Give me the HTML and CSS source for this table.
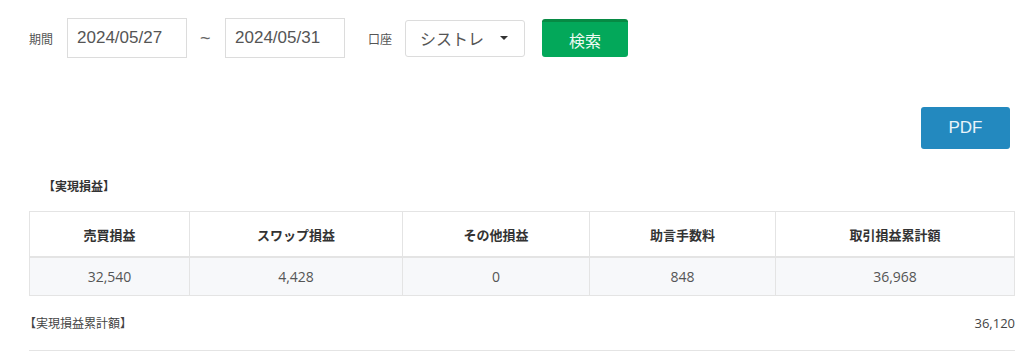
FILE: index.html
```html
<!DOCTYPE html>
<html lang="ja">
<head>
    <meta charset="UTF-8">
    <meta name="viewport" content="width=device-width, initial-scale=1.0">
    <title>実現損益</title>
    <link rel="stylesheet" href="styles.css">
</head>
<body>

<div class="page">
    <form class="search">
        <span class="search-label">期間</span>
        <input class="date-input" type="text" value="2024/05/27">
        <span class="range-sep">~</span>
        <input class="date-input" type="text" value="2024/05/31">
        <span class="search-label account-label">口座</span>
        <div class="select">
            <span>シストレ</span>
            <span class="caret"></span>
        </div>
        <button class="btn-search" type="button">検索</button>
    </form>

    <div class="toolbar">
        <button class="btn-pdf" type="button">PDF</button>
    </div>

    <h2 class="section-title">【実現損益】</h2>
    <table class="pl-table">
        <thead>
            <tr>
                <th class="col-1">売買損益</th>
                <th class="col-2">スワップ損益</th>
                <th class="col-3">その他損益</th>
                <th class="col-4">助言手数料</th>
                <th class="col-5">取引損益累計額</th>
            </tr>
        </thead>
        <tbody>
            <tr>
                <td>32,540</td>
                <td>4,428</td>
                <td>0</td>
                <td>848</td>
                <td>36,968</td>
            </tr>
        </tbody>
    </table>

    <div class="total">
        <span class="total-label">【実現損益累計額】</span>
        <span class="total-value">36,120</span>
    </div>
</div>

</body>
</html>
```

FILE: styles.css
```css
body {
    margin: 0;
    background: #fff;
    font-family: "Noto Sans CJK JP", "Open Sans", sans-serif;
    color: #333;
}
.page {
    padding: 0 9px 0 29px;
}

/* search form */
.search {
    display: flex;
    align-items: center;
    height: 40px;
    margin: 18px 0 0;
}
.search-label {
    font-size: 12px;
    color: #555;
    margin-right: 14px;
}
.account-label {
    margin-left: 23px;
    margin-right: 13px;
}
.date-input {
    box-sizing: border-box;
    width: 120px;
    height: 40px;
    padding: 0 9px;
    border: 1px solid #dcdcdc;
    font-family: "Liberation Sans", Arial, sans-serif;
    font-size: 17px;
    color: #555;
    outline: none;
}
.range-sep {
    margin: 0 14px 0 13px;
    width: 11px;
    font-family: "Liberation Sans", Arial, sans-serif;
    font-size: 18px;
    color: #666;
}
.select {
    box-sizing: border-box;
    display: flex;
    align-items: center;
    justify-content: space-between;
    width: 120px;
    height: 37px;
    padding: 0 16px 0 14px;
    border: 1px solid #dcdcdc;
    border-radius: 3px;
    font-size: 16px;
    color: #555;
}
.caret {
    width: 0;
    height: 0;
    border-left: 4px solid transparent;
    border-right: 4px solid transparent;
    border-top: 4px solid #333;
}
.btn-search {
    box-sizing: border-box;
    width: 86px;
    height: 38px;
    margin-left: 17px;
    border: none;
    border-top: 3px solid #078a44;
    border-radius: 3px;
    background: #03a85a;
    color: #eefaf2;
    font-family: "Noto Sans CJK JP", sans-serif;
    font-size: 16px;
    cursor: pointer;
}

/* pdf export */
.toolbar {
    display: flex;
    justify-content: flex-end;
    margin-top: 49px;
    padding-right: 5px;
}
.btn-pdf {
    width: 89px;
    height: 42px;
    border: none;
    border-radius: 3px;
    background: #2389bf;
    color: #e9f4fa;
    font-family: "Liberation Sans", Arial, sans-serif;
    font-size: 17px;
    cursor: pointer;
}

.section-title {
    margin: 28px 0 0;
    padding-left: 14px;
    font-size: 12px;
    font-weight: bold;
    line-height: 18px;
    color: #333;
}

/* realised profit table */
.pl-table {
    width: 986px;
    margin-top: 16px;
    border-collapse: collapse;
    border: 1px solid #e4e4e4;
}
.pl-table th,
.pl-table td {
    border: 1px solid #e4e4e4;
    text-align: center;
    padding: 0;
}
.pl-table th {
    height: 44px;
    border-bottom: 2px solid #e4e4e4;
    font-size: 13px;
    font-weight: bold;
    color: #333;
}
.pl-table td {
    height: 37px;
    background: #f7f8fa;
    font-family: "Open Sans", sans-serif;
    font-size: 14px;
    color: #555;
}
.col-1 { width: 159px; }
.col-2 { width: 212px; }
.col-3 { width: 186px; }
.col-4 { width: 185px; }

.total {
    display: flex;
    justify-content: space-between;
    align-items: center;
    margin-top: 18px;
    padding-bottom: 18px;
    line-height: 18px;
    border-bottom: 1px solid #e4e4e4;
    font-size: 12px;
    color: #444;
}
.total-label {
    margin-left: -5px;
}
.total-value {
    font-family: "Open Sans", sans-serif;
    font-size: 13px;
}
```
